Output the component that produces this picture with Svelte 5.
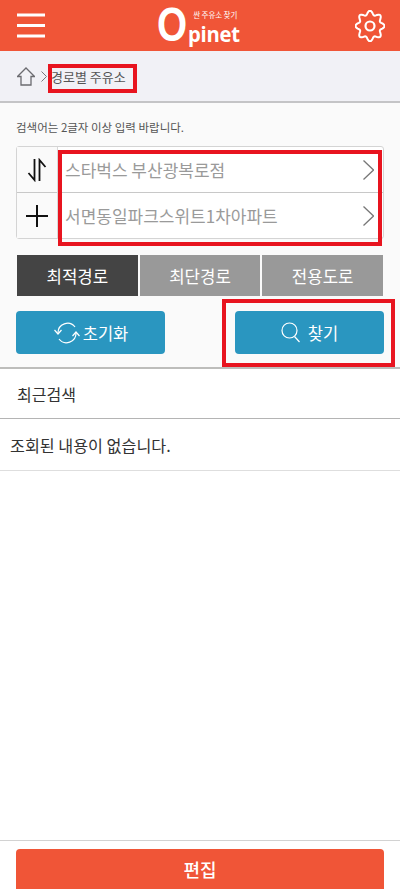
<script>
  const tabs = [
    { label: '최적경로', active: true },
    { label: '최단경로', active: false },
    { label: '전용도로', active: false }
  ];
  const places = ['스타벅스 부산광복로점', '서면동일파크스위트1차아파트'];

  // outline of the eight-lobed settings gear
  const gear = Array.from({ length: 96 }, (_, i) => {
    const a = (i / 96) * Math.PI * 2;
    const r = 12.6 + 1.9 * Math.cos(8 * a);
    return `${(15 + r * Math.sin(a)).toFixed(2)} ${(16 - 1.05 * r * Math.cos(a)).toFixed(2)}`;
  }).join('L');
</script>

<div class="page">
  <header class="top">
    <svg class="menu" width="30" height="28" viewBox="0 0 30 28" fill="none" stroke="#fff" stroke-width="3"><path d="M1 3h28M1 13.500h28M1 24h28"/></svg>
    <div class="logo">
      <span class="big">O</span>
      <div class="logo-r">
        <span class="tag">싼 주유소 찾기</span>
        <span class="pinet">pinet</span>
      </div>
    </div>
    <svg class="gear" width="30" height="32" viewBox="0 0 30 32" fill="none" stroke="#fff" stroke-width="2" stroke-linejoin="round">
      <path d={`M${gear}Z`}/>
      <circle cx="15" cy="16" r="4.500" stroke-width="2.200"/>
    </svg>
  </header>

  <nav class="crumb">
    <svg width="18" height="19" viewBox="0 0 18 19" fill="none" stroke="#6b6b70" stroke-width="1.300"><path d="M.5 9.500 9 1l8.500 8.500h-3.500V18H4V9.500z"/></svg>
    <svg class="sep" width="6" height="11" viewBox="0 0 6 11" fill="none" stroke="#77777c" stroke-width="1"><path d="m.5.500 5 5-5 5"/></svg>
    <span>경로별 주유소</span>
    <i class="mark m1"></i>
  </nav>

  <section class="search">
    <p class="hint">검색어는 2글자 이상 입력 바랍니다.</p>
    <div class="route">
      <div class="route-side">
        <button class="side-btn" aria-label="swap">
          <svg width="20" height="24" viewBox="0 0 20 24" fill="none" stroke="#111" stroke-width="1.800"><path d="M7.500 1v21L1.500 15M12.500 23V2l6 7"/></svg>
        </button>
        <button class="side-btn" aria-label="add">
          <svg width="22" height="22" viewBox="0 0 22 22" fill="none" stroke="#111" stroke-width="2"><path d="M11 0v22M0 11h22"/></svg>
        </button>
      </div>
      <div class="route-main">
        {#each places as p}
          <div class="place">
            <span>{p}</span>
            <svg width="11" height="20" viewBox="0 0 11 20" fill="none" stroke="#777" stroke-width="1.300"><path d="m.5.500 10 9.500-10 9.500"/></svg>
          </div>
        {/each}
      </div>
      <i class="mark m2"></i>
    </div>

    <div class="tabs">
      {#each tabs as t}
        <button class="tab" class:active={t.active}>{t.label}</button>
      {/each}
    </div>

    <div class="actions">
      <button class="act">
        <svg width="28" height="24" viewBox="0 0 28 24" fill="none" stroke="#fff" stroke-width="1.200"><path d="M5 12a9.500 9.500 0 0 1 17-6M23 12a9.500 9.500 0 0 1-17 6"/><path d="m1.500 9 3.500 4 3.500-4M19.500 15l3.500-4 3.500 4"/></svg>
        <span>초기화</span>
      </button>
      <button class="act find">
        <svg width="20" height="21" viewBox="0 0 20 21" fill="none" stroke="#fff" stroke-width="1.200"><circle cx="8.500" cy="8.500" r="7.500"/><path d="m13.500 14.500 5 5.500"/></svg>
        <span>찾기</span>
        <i class="mark m3"></i>
      </button>
    </div>
  </section>

  <h2 class="recent">최근검색</h2>
  <div class="empty">조회된 내용이 없습니다.</div>
  <div class="spacer"></div>

  <footer class="foot">
    <button class="edit">편집</button>
  </footer>
</div>

<style>
  :global(body) { margin: 0; background: #fff; }
  .page {
    width: 400px; height: 889px; overflow: hidden;
    display: flex; flex-direction: column;
    font-family: "Noto Sans CJK KR", "Noto Sans", sans-serif;
    color: #333;
  }
  button { font-family: inherit; border: 0; margin: 0; padding: 0; }
  .top {
    height: 51px; flex: none; background: #f05537;
    display: flex; align-items: center; justify-content: space-between;
    padding: 0 15px 0 16px; box-sizing: border-box;
  }
  .logo { display: flex; align-items: flex-end; color: #fff; height: 51px; width: 84px; margin-right: 3px; }
  .big {
    font: 700 44px/50px "Liberation Sans", sans-serif;
    margin: 0 -3px 0 0; transform: scale(.88, 1.1); transform-origin: left 42px;
    flex: none;
  }
  .logo-r { display: flex; flex-direction: column; align-items: flex-start; padding-bottom: 2px; }
  .tag { font-size: 7.500px; line-height: 10px; margin: 0 0 0 5px; white-space: nowrap; letter-spacing: -.1px; }
  .pinet { font: 700 22px/26px "Open Sans", sans-serif; margin-bottom: 3px; letter-spacing: -.3px; transform: scaleX(.92); transform-origin: left center; }
  .crumb {
    position: relative;
    height: 52px; flex: none; box-sizing: border-box;
    background: #f1f1f6; border-bottom: 2px solid #c4c4c6;
    display: flex; align-items: center; padding: 0 0 0 17px;
    font-size: 13px; color: #555;
  }
  .sep { margin: 0 5px 0 6px; }
  .crumb span { margin-left: -1px; }
  .search {
    flex: none; height: 266px; box-sizing: border-box;
    background: #fafafa; padding: 16px 16px 0;
    border-bottom: 2px solid #bdbdbb;
    display: flex; flex-direction: column;
  }
  .hint { margin: 0; font-size: 11.500px; line-height: 17px; color: #555; }
  .route {
    position: relative;
    margin-top: 10px; height: 93px; box-sizing: border-box;
    border: 1px solid #d4d4d4; border-radius: 3px;
    display: flex; background: #fff;
  }
  .route-side { width: 40px; flex: none; display: flex; flex-direction: column; border-right: 1px solid #d8d8d8; background: #fafafa; }
  .side-btn { flex: 1; background: none; display: flex; align-items: center; justify-content: center; }
  .side-btn + .side-btn { border-top: 1px solid #c8c8c8; }
  .route-main { flex: 1; display: flex; flex-direction: column; min-width: 0; }
  .place {
    flex: 1; display: flex; align-items: center; justify-content: space-between;
    padding: 0 9px 0 7px; font-size: 17px; color: #9a9a9a;
  }
  .place + .place { border-top: 1px solid #c8c8c8; }
  .tabs { display: flex; gap: 2px; margin-top: 16px; padding: 0 1px; height: 41px; }
  .tab { flex: 1; background: #999; color: #fff; font-size: 16.800px; }
  .tab.active { background: #444; }
  .actions { display: flex; justify-content: space-between; margin-top: 15px; height: 43px; }
  .act {
    position: relative;
    width: 149px; background: #2a96c0; color: #fff; border-radius: 4px;
    display: flex; align-items: center; justify-content: center; gap: 2px;
    font-size: 16.500px;
  }
  .find { gap: 7px; }
  .recent {
    margin: 0; height: 50px; flex: none; box-sizing: border-box;
    display: flex; align-items: center; padding-left: 17px;
    font-size: 16px; font-weight: 400; color: #333;
    border-bottom: 1px solid #b4b4b4; background: #fff;
  }
  .empty {
    height: 52px; flex: none; box-sizing: border-box;
    display: flex; align-items: center; padding-left: 10px;
    font-size: 16.200px; color: #333;
    border-bottom: 1px solid #dedede; background: #fff;
  }
  .spacer { flex: 1; background: #fff; }
  .foot { height: 49px; flex: none; box-sizing: border-box; border-top: 1px solid #d2d2d2; padding: 8px 16px 0; background: #fff; }
  .edit {
    width: 100%; height: 50px; background: #f05537; color: #fff;
    border-radius: 4px 4px 0 0; font-size: 18px; font-weight: 500;
    display: block; padding-bottom: 10px;
  }
  .mark { position: absolute; border: 4px solid #e8141f; box-sizing: border-box; pointer-events: none; }
  .m1 { left: 48px; top: 13px; width: 89px; height: 29px; }
  .m2 { left: 41px; top: 3px; width: 324px; height: 96px; }
  .m3 { left: -13px; top: -12px; width: 173px; height: 68px; }
</style>
